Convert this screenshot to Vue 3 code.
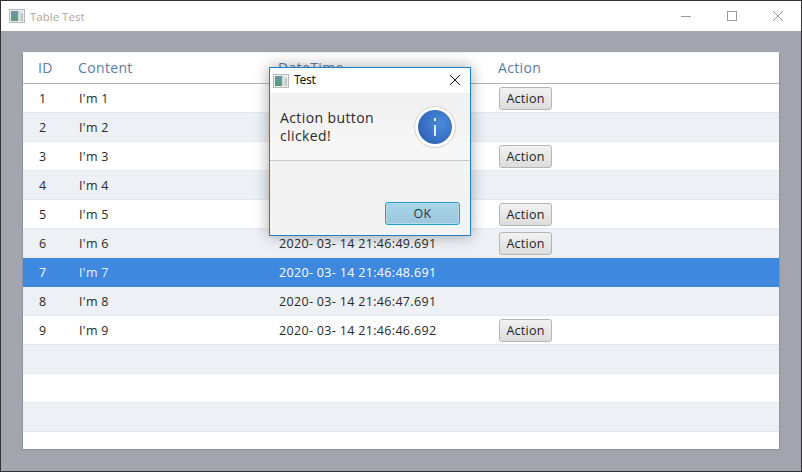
<script setup>
const rows = [
  { id: 1, content: "I'm 1", time: '', action: true },
  { id: 2, content: "I'm 2", time: '', action: false },
  { id: 3, content: "I'm 3", time: '', action: true },
  { id: 4, content: "I'm 4", time: '', action: false },
  { id: 5, content: "I'm 5", time: '', action: true },
  { id: 6, content: "I'm 6", time: '2020- 03- 14 21:46:49.691', action: true },
  { id: 7, content: "I'm 7", time: '2020- 03- 14 21:46:48.691', action: false, selected: true },
  { id: 8, content: "I'm 8", time: '2020- 03- 14 21:46:47.691', action: false },
  { id: 9, content: "I'm 9", time: '2020- 03- 14 21:46:46.692', action: true },
  { id: '', content: '', time: '', action: false },
  { id: '', content: '', time: '', action: false },
  { id: '', content: '', time: '', action: false },
  { id: '', content: '', time: '', action: false }
]
</script>

<template>
  <div class="window">
    <header class="titlebar">
      <svg class="appicon" width="16" height="14" viewBox="0 0 16 14">
        <defs>
          <linearGradient id="pane" x1="0" y1="0" x2="0" y2="1">
            <stop offset="0" stop-color="#6d93a8" />
            <stop offset="1" stop-color="#5f9a7c" />
          </linearGradient>
        </defs>
        <rect x="0.5" y="0.5" width="15" height="13" fill="#ededed" stroke="#b8b8b8" />
        <rect x="2" y="2" width="7" height="10" fill="url(#pane)" />
        <rect x="9" y="2" width="3" height="10" fill="#d5dedc" />
        <rect x="12" y="4" width="2" height="8" fill="#b9c8c6" />
      </svg>
      <span class="wintitle">Table Test</span>
      <div class="winbtns">
        <svg width="12" height="12" viewBox="0 0 12 12"><path d="M1 6.5H11" stroke="#999" fill="none" /></svg>
        <svg width="12" height="12" viewBox="0 0 12 12"><rect x="1.5" y="1.5" width="9" height="9" stroke="#999" fill="none" /></svg>
        <svg width="12" height="12" viewBox="0 0 12 12"><path d="M1 1L11 11M11 1L1 11" stroke="#999" fill="none" /></svg>
      </div>
    </header>
    <main class="content">
      <section class="table">
        <div class="row head">
          <div class="cell c1">ID</div>
          <div class="cell c2">Content</div>
          <div class="cell c3">DateTime</div>
          <div class="cell c4">Action</div>
        </div>
        <div class="rows">
          <div v-for="(r, i) in rows" :key="i" class="row" :class="{ odd: i % 2 === 1, selected: r.selected }">
            <div class="cell c1 v1">{{ r.id }}</div>
            <div class="cell c2 v2">{{ r.content }}</div>
            <div class="cell c3 v3">{{ r.time }}</div>
            <div class="cell c4 v4"><button v-if="r.action" class="action">Action</button></div>
          </div>
        </div>
      </section>
    </main>

    <div class="dialog">
      <div class="dtitle">
        <svg class="appicon" width="16" height="14" viewBox="0 0 16 14">
          <rect x="0.5" y="0.5" width="15" height="13" fill="#ededed" stroke="#b8b8b8" />
          <rect x="2" y="2" width="7" height="10" fill="url(#pane)" />
          <rect x="9" y="2" width="3" height="10" fill="#d5dedc" />
          <rect x="12" y="4" width="2" height="8" fill="#b9c8c6" />
        </svg>
        <span class="dtitletext">Test</span>
        <svg class="dclose" width="12" height="12" viewBox="0 0 12 12"><path d="M1 1L11 11M11 1L1 11" stroke="#111" fill="none" /></svg>
      </div>
      <div class="dhead">
        <div class="dmsg">Action button clicked!</div>
        <div class="dicon">
          <svg width="42" height="42" viewBox="0 0 42 42">
            <defs>
              <radialGradient id="blue" cx="0.65" cy="0.4" r="0.75">
                <stop offset="0" stop-color="#4a8cdc" />
                <stop offset="1" stop-color="#2f5fb4" />
              </radialGradient>
            </defs>
            <circle cx="21" cy="21" r="20.5" fill="#fff" stroke="#d2d2d2" />
            <circle cx="21" cy="21" r="17" fill="url(#blue)" />
            <rect x="20" y="19" width="2" height="11" fill="#dfeafa" />
            <rect x="20" y="12" width="2" height="3" fill="#dfeafa" />
          </svg>
        </div>
      </div>
      <div class="dfoot">
        <button class="ok">OK</button>
      </div>
    </div>
  </div>
</template>

<style>
html, body { margin: 0; background: #333; }
</style>

<style scoped>
.window {
  position: relative;
  box-sizing: border-box;
  width: 802px;
  height: 472px;
  border: 1px solid #333;
  display: flex;
  flex-direction: column;
  font-family: "Open Sans", "Noto Sans", sans-serif;
  overflow: hidden;
}
.titlebar {
  height: 30px;
  flex: none;
  background: #fff;
  display: flex;
  align-items: center;
  padding-left: 8px;
}
.wintitle {
  margin-left: 5px;
  font-size: 11.5px;
  color: #b0a8a0;
}
.winbtns {
  margin-left: auto;
  display: flex;
  gap: 34px;
  padding-right: 17px;
}
.content {
  flex: 1;
  background: #a2a5ad;
  padding: 21px;
  min-height: 0;
  display: flex;
}
.table {
  flex: 1;
  background: #fff;
  border: 1px solid #8f9299;
  border-color: #f0f0f0 #8f9299 #8f9299 #8f9299;
  overflow: hidden;
}
.row {
  display: grid;
  grid-template-columns: 40px 200px 220px 1fr;
  height: 29px;
  box-sizing: border-box;
  border-bottom: 1px solid #e6e8ec;
  align-items: center;
  font-size: 12.5px;
  letter-spacing: 0.33px;
  color: #2a2a2a;
  background: #fff;
}
.row.odd { background: #edf0f5; }
.row.selected { background: #3f88df; color: #fff; border-bottom-color: #3f88df; }
.row.selected .v2 { color: #e2f1ff; }
.row.head {
  height: 31px;
  font-size: 14px;
  letter-spacing: 0.35px;
  color: #5b7ea6;
  border-bottom: 1px solid #b4b4b4;
  padding-bottom: 1px;
}
.c1, .c2, .c3, .c4 { padding-left: 15px; }
.v1, .v2, .v3, .v4 { padding-left: 16px; }
.action {
  display: block;
  box-sizing: border-box;
  width: 53px;
  height: 23px;
  padding: 0;
  border: 1px solid #b5b5b5;
  border-radius: 3px;
  background: linear-gradient(#f2f2f2, #dcdcdc);
  font: inherit;
  letter-spacing: 0.25px;
  color: #222;
}
.dialog {
  position: absolute;
  left: 268px;
  top: 66px;
  width: 202px;
  height: 169px;
  box-sizing: border-box;
  border: 1px solid #1c80cc;
  background: #f3f3f3;
  box-shadow: 0 0 14px rgba(0, 0, 0, 0.35);
  display: flex;
  flex-direction: column;
}
.dtitle {
  height: 25px;
  flex: none;
  background: #fff;
  display: flex;
  align-items: center;
  padding-left: 3px;
  position: relative;
}
.dtitletext {
  margin-left: 5px;
  margin-top: -2px;
  font-family: "Noto Sans", sans-serif;
  font-size: 12px;
  letter-spacing: -0.25px;
  color: #111;
}
.dclose { position: absolute; right: 9px; top: 6px; }
.dhead {
  height: 68px;
  flex: none;
  box-sizing: border-box;
  background: linear-gradient(#f0f0f0, #f8f8f8);
  border-bottom: 1px solid #c8c8c8;
  display: flex;
  align-items: center;
  padding: 1px 14px 0 10px;
}
.dmsg {
  width: 110px;
  font-size: 14px;
  letter-spacing: 0.4px;
  line-height: 18px;
  color: #2a2a2a;
}
.dicon { margin-left: auto; display: flex; }
.dfoot {
  flex: 1;
  display: flex;
  justify-content: flex-end;
  align-items: flex-end;
  padding: 0 10px 10px 0;
}
.ok {
  box-sizing: border-box;
  width: 75px;
  height: 23px;
  padding: 0;
  border: 1px solid #1a9fd6;
  border-radius: 3px;
  background: linear-gradient(#a9d5ea, #9cc6dc);
  box-shadow: inset 0 0 0 1px #b9dcec;
  font: inherit;
  font-size: 12.5px;
  letter-spacing: 0.3px;
  color: #333;
}
</style>
